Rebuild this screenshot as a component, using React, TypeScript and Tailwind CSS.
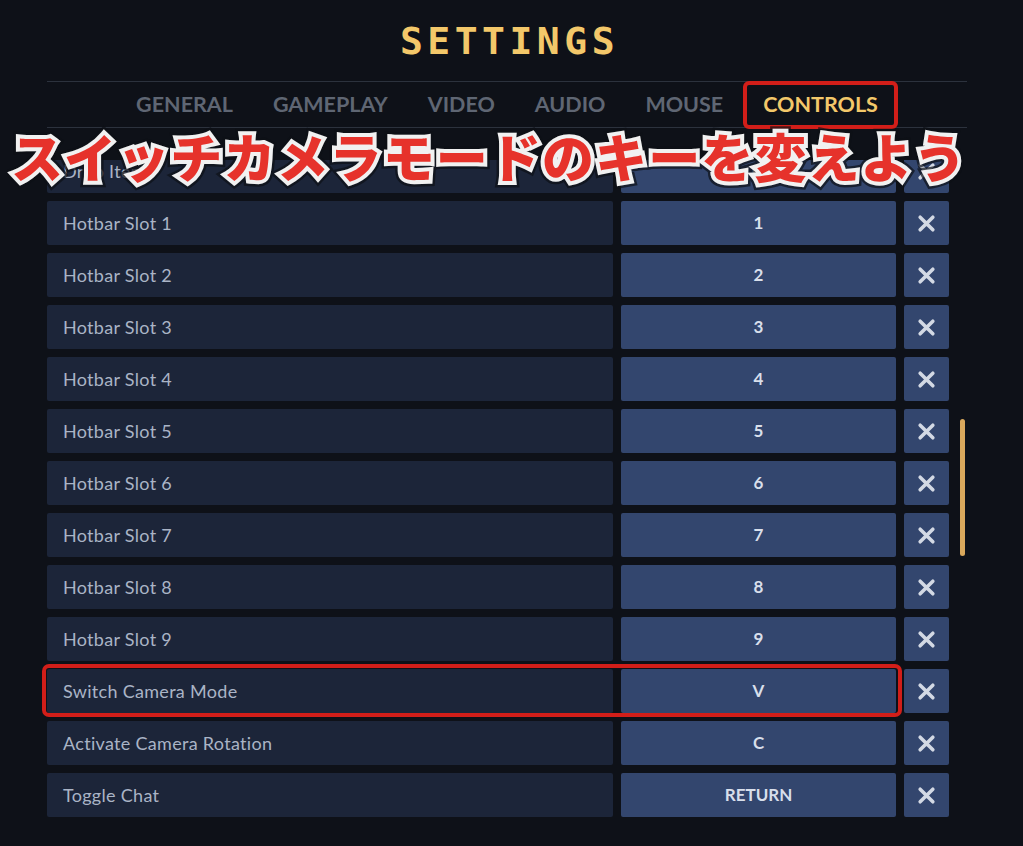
import React from 'react';

const tabs = ['GENERAL', 'GAMEPLAY', 'VIDEO', 'AUDIO', 'MOUSE', 'CONTROLS'];

const bindings: { action: string; key: string }[] = [
  { action: 'Drop Item', key: 'Q' },
  { action: 'Hotbar Slot 1', key: '1' },
  { action: 'Hotbar Slot 2', key: '2' },
  { action: 'Hotbar Slot 3', key: '3' },
  { action: 'Hotbar Slot 4', key: '4' },
  { action: 'Hotbar Slot 5', key: '5' },
  { action: 'Hotbar Slot 6', key: '6' },
  { action: 'Hotbar Slot 7', key: '7' },
  { action: 'Hotbar Slot 8', key: '8' },
  { action: 'Hotbar Slot 9', key: '9' },
  { action: 'Switch Camera Mode', key: 'V' },
  { action: 'Activate Camera Rotation', key: 'C' },
  { action: 'Toggle Chat', key: 'RETURN' },
];

const ClearIcon = () => (
  <svg width="19" height="19" viewBox="0 0 18 18" fill="none">
    <path d="M3 3 L15 15 M15 3 L3 15" stroke="#d3d9e4" strokeWidth="3.4" strokeLinecap="round" />
  </svg>
);

const BindingRow = ({ action, keyName, highlight }: { action: string; keyName: string; highlight?: boolean }) => (
  <div className="relative flex h-[44px]">
    <div className="flex w-[566px] items-center rounded-[2px] bg-[#1c2539] pl-[16px] text-[18px] tracking-[0.3px] text-[#aab4c6]">
      {action}
    </div>
    <div className="ml-[8px] flex w-[275px] items-center justify-center rounded-[2px] bg-[#33466e] text-[17px] font-bold text-[#d8dfeb]">
      {keyName}
    </div>
    <button className="ml-[8px] flex w-[45px] items-center justify-center rounded-[2px] bg-[#33466e]">
      <ClearIcon />
    </button>
    {highlight && (
      <div className="pointer-events-none absolute left-[-5px] top-[-5px] h-[53px] w-[860px] rounded-[7px] border-[4px] border-[#d21e19]" />
    )}
  </div>
);

const Caption = ({ text }: { text: string }) => (
  <div className="pointer-events-none absolute left-[11px] top-[124px] whitespace-nowrap text-[52px] font-black leading-[64px] tracking-[1.1px] [font-family:'Noto_Sans_CJK_JP',sans-serif]">
    <span className="absolute left-0 top-0 text-[#1b1f27] [-webkit-text-stroke:13px_#0d1016] opacity-70">{text}</span>
    <span className="absolute left-0 top-0 text-white [-webkit-text-stroke:8px_#f1f1f1]">{text}</span>
    <span className="relative text-[#e6322b]">{text}</span>
  </div>
);

export default function App() {
  return (
    <div className="relative h-[846px] w-[1023px] overflow-hidden bg-[#0e1118] [font-family:Lato,'Open_Sans',sans-serif]">
      <div className="ml-[47px] w-[920px]">
        <div className="flex h-[81px] items-center justify-center pl-[5px]">
          <h1 className="text-[38px] font-bold leading-none tracking-[4.5px] text-[#f3c86a] [font-family:'DejaVu_Sans_Mono',monospace]">
            SETTINGS
          </h1>
        </div>

        <div className="flex h-[47px] items-center justify-center border-y border-[#2c323d]">
          {tabs.map((tab) => (
            <div
              key={tab}
              className={
                tab === 'CONTROLS'
                  ? '-my-[2px] flex h-[48px] items-center rounded-[6px] border-[4px] border-[#d21e19] px-[16px] text-[21.5px] font-bold text-[#f3c86a]'
                  : 'flex h-[48px] items-center border-[4px] border-transparent px-[16px] text-[21.5px] font-bold text-[#5f6673]'
              }
            >
              {tab}
            </div>
          ))}
        </div>

        <div className="-ml-[5px] mt-[32px] flex h-[686px] overflow-hidden pl-[5px]">
          <div className="-mt-[11px] flex flex-col gap-[8px]">
            {bindings.map((b) => (
              <BindingRow key={b.action} action={b.action} keyName={b.key} highlight={b.action === 'Switch Camera Mode'} />
            ))}
          </div>
          <div className="w-[18px] pl-[11px] pt-[259px]">
            <div className="h-[137px] w-[5px] rounded-full bg-[#d9a85c]" />
          </div>
        </div>
      </div>

      <Caption text="スイッチカメラモードのキーを変えよう" />
    </div>
  );
}
